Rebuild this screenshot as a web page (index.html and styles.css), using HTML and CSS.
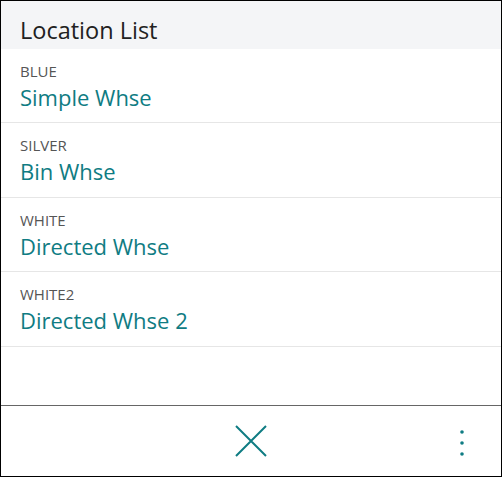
FILE: index.html
```html
<!DOCTYPE html>
<html lang="en">
<head>
<meta charset="UTF-8">
<meta name="viewport" content="width=device-width, initial-scale=1.0">
<title>Location List</title>
<link rel="stylesheet" href="styles.css">
</head>
<body>

<div class="page">
  <div class="header">Location List</div>

  <div class="list">
    <div class="row">
      <div class="code">BLUE</div>
      <div class="name">Simple Whse</div>
    </div>
    <div class="row">
      <div class="code">SILVER</div>
      <div class="name">Bin Whse</div>
    </div>
    <div class="row">
      <div class="code">WHITE</div>
      <div class="name">Directed Whse</div>
    </div>
    <div class="row">
      <div class="code">WHITE2</div>
      <div class="name">Directed Whse 2</div>
    </div>
  </div>

  <div class="footer">
    <button class="close" aria-label="Close">
      <svg width="32" height="32" viewBox="0 0 32 32">
        <path d="M1 1 L31 31 M31 1 L1 31" stroke="#0f7c83" stroke-width="2" fill="none"/>
      </svg>
    </button>
    <button class="more" aria-label="More">
      <svg width="6" height="28" viewBox="0 0 6 28">
        <circle cx="3" cy="3" r="1.8" fill="#0f7c83"/>
        <circle cx="3" cy="14" r="1.8" fill="#0f7c83"/>
        <circle cx="3" cy="25" r="1.8" fill="#0f7c83"/>
      </svg>
    </button>
  </div>
</div>

</body>
</html>
```

FILE: styles.css
```css
body {
  margin: 0;
  padding: 0;
  font-family: "Open Sans", "Noto Sans", sans-serif;
  background-color: #fff;
}
.page {
  width: 502px;
  height: 477px;
  box-sizing: border-box;
  border: 1px solid #000;
  display: flex;
  flex-direction: column;
}
.header {
  height: 48px;
  padding-left: 19px;
  background-color: #f4f5f7;
  color: #212121;
  font-size: 23.5px;
  line-height: 58px;
  flex-shrink: 0;
}
.list {
  flex: 1;
}
.row {
  height: 73.4px;
  padding-left: 19px;
  border-bottom: 1px solid #e6e6e6;
}
.code {
  padding-top: 12px;
  font-size: 15px;
  line-height: 20px;
  color: #555;
}
.name {
  font-size: 22px;
  line-height: 32px;
  color: #0f7c83;
}
.footer {
  height: 70px;
  border-top: 1px solid #666;
  display: flex;
  align-items: center;
  position: relative;
  justify-content: center;
}
button {
  background: none;
  border: none;
  padding: 0;
  cursor: pointer;
  display: flex;
}
.more {
  position: absolute;
  right: 36px;
  top: 23px;
}
```
